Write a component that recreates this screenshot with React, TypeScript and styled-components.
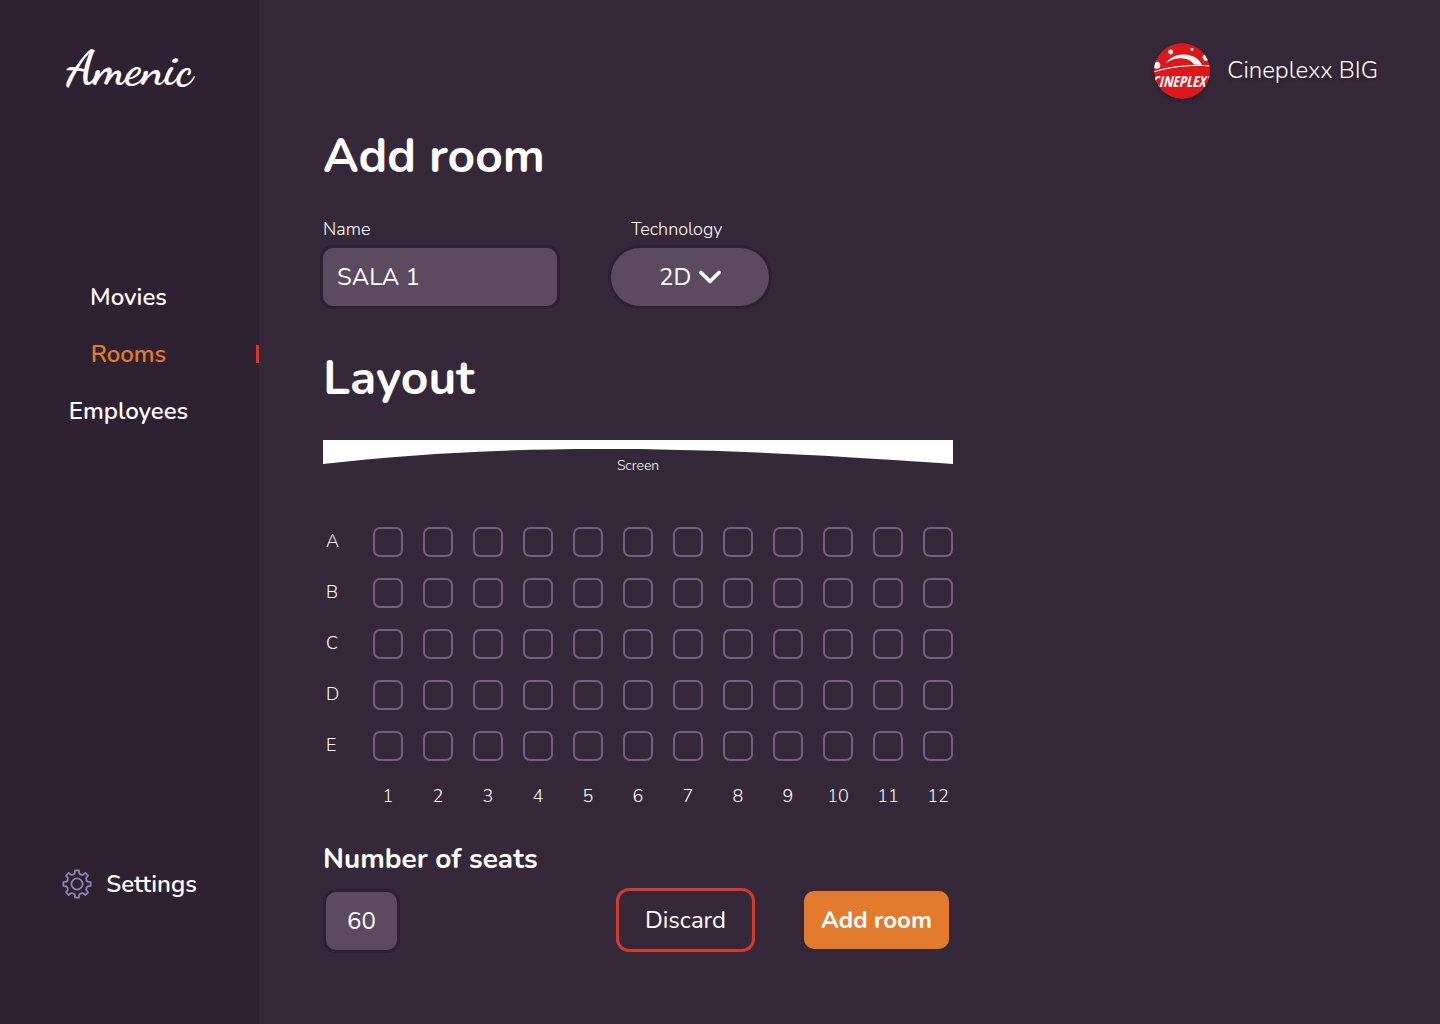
import React, { useState } from "react";
import styled, { createGlobalStyle } from "styled-components";

const color = {
  sidebar: "#2e2132",
  page: "#352839",
  field: "#5c4a60",
  seat: "#75617f",
  accent: "#e37b2e",
  danger: "#d03a2f",
  gear: "#8e86b3",
};

const GlobalStyle = createGlobalStyle`
  *, *::before, *::after { box-sizing: border-box; }
  body {
    margin: 0;
    background: ${color.page};
    color: #fff;
    font-family: Nunito, Lato, "Open Sans", sans-serif;
  }
  h1, h2, p, figure, ul { margin: 0; padding: 0; }
  input, select, button { font-family: inherit; color: inherit; }
`;

const Shell = styled.div`
  display: flex;
  min-height: 100vh;
`;

const Sidebar = styled.aside`
  flex: 0 0 259px;
  display: flex;
  flex-direction: column;
  padding: 39px 0 120px;
  background: ${color.sidebar};
`;

const Brand = styled.a`
  text-align: center;
  color: #fff;
  text-decoration: none;
  font: 700 48px/60px "Dancing Script", cursive;
`;

const Nav = styled.ul`
  list-style: none;
  margin-top: 170px;
`;

const NavLink = styled.a<{ $active?: boolean }>`
  position: relative;
  display: block;
  padding-right: 2px;
  text-align: center;
  text-decoration: none;
  font-size: 24px;
  font-weight: 600;
  line-height: 57px;
  color: ${(p) => (p.$active ? color.accent : "#fff")};

  &::after {
    content: "";
    display: ${(p) => (p.$active ? "block" : "none")};
    position: absolute;
    right: 0;
    top: 19px;
    width: 3px;
    height: 18px;
    background: ${color.danger};
  }
`;

const SettingsLink = styled.a`
  display: flex;
  align-items: center;
  justify-content: center;
  gap: 14px;
  margin-top: auto;
  color: #fff;
  text-decoration: none;
  font-size: 24px;
  font-weight: 600;
  line-height: 40px;
`;

const Main = styled.main`
  flex: 1;
  min-width: 0;
  padding: 43px 62px 43px 64px;
`;

const Account = styled.header`
  display: flex;
  align-items: flex-start;
  justify-content: flex-end;
  gap: 17px;
  height: 56px;
  font-size: 24px;
  font-weight: 300;
  line-height: 54px;
  text-shadow: 0 2px 4px rgba(0, 0, 0, 0.25);
`;

const Avatar = styled.svg`
  width: 56px;
  height: 56px;
  border-radius: 50%;
  box-shadow: 0 2px 4px rgba(0, 0, 0, 0.25);
  text-shadow: none;
`;

const Form = styled.form`
  max-width: 630px;
`;

const Title = styled.h1`
  margin-top: 27px;
  font-size: 48px;
  font-weight: 700;
  line-height: 60px;
`;

const Subtitle = styled(Title).attrs({ as: "h2" })`
  margin-top: 42px;
`;

const Fields = styled.div`
  display: flex;
  gap: 54px;
  margin-top: 31px;
`;

const Field = styled.div`
  display: flex;
  flex-direction: column;
  gap: 7px;
`;

const Label = styled.label<{ $indent?: boolean }>`
  padding-left: ${(p) => (p.$indent ? "20px" : "0")};
  font-size: 18px;
  font-weight: 300;
  line-height: 24px;
`;

const TextInput = styled.input`
  width: 234px;
  height: 58px;
  padding: 0 14px;
  border: 0;
  border-radius: 10px;
  background: ${color.field};
  box-shadow: 0 0 0 3px ${color.sidebar};
  font-size: 24px;
`;

const SelectWrap = styled.div`
  position: relative;

  svg {
    position: absolute;
    left: 88px;
    top: 22px;
    pointer-events: none;
  }
`;

const Select = styled.select`
  appearance: none;
  width: 158px;
  height: 58px;
  padding: 0 48px;
  border: 0;
  border-radius: 29px;
  background: ${color.field};
  box-shadow: 0 0 0 3px ${color.sidebar};
  font-size: 24px;
`;

const Screen = styled.figure`
  margin-top: 32px;

  svg {
    display: block;
    width: 100%;
    height: 24px;
  }

  figcaption {
    margin-top: -8px;
    text-align: center;
    font-size: 14px;
    font-weight: 300;
    line-height: 20px;
  }
`;

const SeatGrid = styled.div`
  display: grid;
  grid-template-columns: 30px repeat(12, 30px);
  grid-auto-rows: 30px;
  gap: 21px 20px;
  align-items: start;
  margin-top: 51px;
`;

const AxisLabel = styled.span<{ $row?: boolean }>`
  padding-left: ${(p) => (p.$row ? "3px" : "0")};
  text-align: ${(p) => (p.$row ? "left" : "center")};
  font-size: 18px;
  font-weight: 300;
  line-height: 28px;
`;

const Seat = styled.input`
  appearance: none;
  width: 30px;
  height: 30px;
  margin: 0;
  border: 2px solid ${color.seat};
  border-radius: 7px;
  cursor: pointer;

  &:checked {
    background: ${color.seat};
  }
`;

const Footer = styled.div`
  display: flex;
  align-items: flex-end;
  justify-content: space-between;
  margin-top: 29px;
  padding-right: 4px;
`;

const CountLabel = styled.label`
  display: block;
  margin-bottom: 12px;
  font-size: 28px;
  font-weight: 700;
  line-height: 36px;
`;

const CountInput = styled.input`
  display: block;
  width: 77px;
  height: 64px;
  padding: 0;
  border: 3px solid ${color.sidebar};
  border-radius: 13px;
  background: ${color.field};
  text-align: center;
  font-size: 24px;
`;

const Actions = styled.div`
  display: flex;
  align-items: center;
  gap: 49px;
  padding-bottom: 1px;
`;

const Button = styled.button<{ $primary?: boolean }>`
  width: ${(p) => (p.$primary ? "145px" : "139px")};
  height: ${(p) => (p.$primary ? "58px" : "64px")};
  padding: 0;
  border: ${(p) => (p.$primary ? "0" : `3px solid ${color.danger}`)};
  border-radius: ${(p) => (p.$primary ? "10px" : "13px")};
  background: ${(p) => (p.$primary ? color.accent : "transparent")};
  font-size: 24px;
  font-weight: ${(p) => (p.$primary ? 700 : 400)};
  cursor: pointer;
`;

/* Outline of an eight-toothed gear, centred on 15,15. */
const gearPath = (() => {
  const points: string[] = [];
  const at = (deg: number, r: number) => {
    const a = (deg * Math.PI) / 180;
    return `${(15 + r * Math.sin(a)).toFixed(2)} ${(15 - r * Math.cos(a)).toFixed(2)}`;
  };
  for (let i = 0; i < 8; i++) {
    const c = i * 45;
    points.push(
      `${i ? "L" : "M"}${at(c - 12, 10.9)}L${at(c - 8, 13.8)}L${at(c + 8, 13.8)}L${at(c + 12, 10.9)}`,
      `Q${at(c + 22.5, 9.6)} ${at(c + 33, 10.9)}`
    );
  }
  return points.join("") + "Z";
})();

const GearIcon = () => (
  <svg width="30" height="30" viewBox="0 0 30 30" fill="none" stroke={color.gear} strokeWidth="1.8" strokeLinejoin="round" aria-hidden="true">
    <path d={gearPath} />
    <circle cx="15" cy="15" r="5.6" />
  </svg>
);

const CineplexxLogo = () => (
  <Avatar viewBox="0 0 56 56" role="img" aria-label="Cineplexx">
    <circle cx="28" cy="28" r="28" fill="#dd171b" />
    <g fill="#fff">
      <circle cx="16.7" cy="9" r="2.4" />
      <circle cx="38" cy="6.5" r="1.4" />
      <circle cx="52" cy="14.5" r="3.3" />
      <circle cx="2.8" cy="22.2" r="3.5" />
      <path d="M11.5 20.5C16 14 23 11.3 30 11.5C39 11.8 45 16 48 22L40 21.5C37.5 17.5 33 15.4 27 15.2C21 15.2 16 17 11.5 20.5Z" />
      <path d="M0 28.5C14 23.6 33 20.8 56 22.6V23.4C34 21.8 14 24.8 0 29.3Z" />
      <text x="28" y="44" textAnchor="middle" fontFamily="'Open Sans Condensed', 'Roboto Condensed', Lato, sans-serif" fontSize="15" fontWeight="900" fontStyle="italic">
        CINEPLEXX
      </text>
    </g>
  </Avatar>
);

const rows = ["A", "B", "C", "D", "E"];
const columns = Array.from({ length: 12 }, (_, i) => i + 1);

export default function App() {
  const [name, setName] = useState("SALA 1");
  const [count, setCount] = useState("60");

  return (
    <>
      <GlobalStyle />
      <Shell>
        <Sidebar>
          <Brand href="#home">Amenic</Brand>
          <nav>
            <Nav>
              <li><NavLink href="#movies">Movies</NavLink></li>
              <li><NavLink href="#rooms" $active aria-current="page">Rooms</NavLink></li>
              <li><NavLink href="#employees">Employees</NavLink></li>
            </Nav>
          </nav>
          <SettingsLink href="#settings">
            <GearIcon />
            Settings
          </SettingsLink>
        </Sidebar>
        <Main>
          <Account>
            <CineplexxLogo />
            <span>Cineplexx BIG</span>
          </Account>
          <Form onSubmit={(e) => e.preventDefault()}>
            <Title>Add room</Title>
            <Fields>
              <Field>
                <Label htmlFor="name">Name</Label>
                <TextInput id="name" value={name} onChange={(e) => setName(e.target.value)} />
              </Field>
              <Field>
                <Label htmlFor="technology" $indent>Technology</Label>
                <SelectWrap>
                  <Select id="technology" defaultValue="2D">
                    <option>2D</option>
                    <option>3D</option>
                  </Select>
                  <svg width="22" height="14" viewBox="0 0 22 14" fill="none" stroke="#fff" strokeWidth="3.8" strokeLinecap="round" strokeLinejoin="round" aria-hidden="true">
                    <path d="M2 2.5L11 11.5L20 2.5" />
                  </svg>
                </SelectWrap>
              </Field>
            </Fields>
            <Subtitle>Layout</Subtitle>
            <Screen>
              <svg viewBox="0 0 630 24" preserveAspectRatio="none" aria-hidden="true">
                <path d="M0 0H630V24C450 11 350 9 275 9C170 9 80 15 0 24Z" fill="#fff" />
              </svg>
              <figcaption>Screen</figcaption>
            </Screen>
            <SeatGrid>
              {rows.map((row) => (
                <React.Fragment key={row}>
                  <AxisLabel $row>{row}</AxisLabel>
                  {columns.map((n) => (
                    <Seat key={n} type="checkbox" aria-label={`Seat ${row}${n}`} />
                  ))}
                </React.Fragment>
              ))}
              <span />
              {columns.map((n) => (
                <AxisLabel key={n}>{n}</AxisLabel>
              ))}
            </SeatGrid>
            <Footer>
              <div>
                <CountLabel htmlFor="count">Number of seats</CountLabel>
                <CountInput id="count" inputMode="numeric" value={count} onChange={(e) => setCount(e.target.value)} />
              </div>
              <Actions>
                <Button type="button">Discard</Button>
                <Button type="submit" $primary>Add room</Button>
              </Actions>
            </Footer>
          </Form>
        </Main>
      </Shell>
    </>
  );
}
